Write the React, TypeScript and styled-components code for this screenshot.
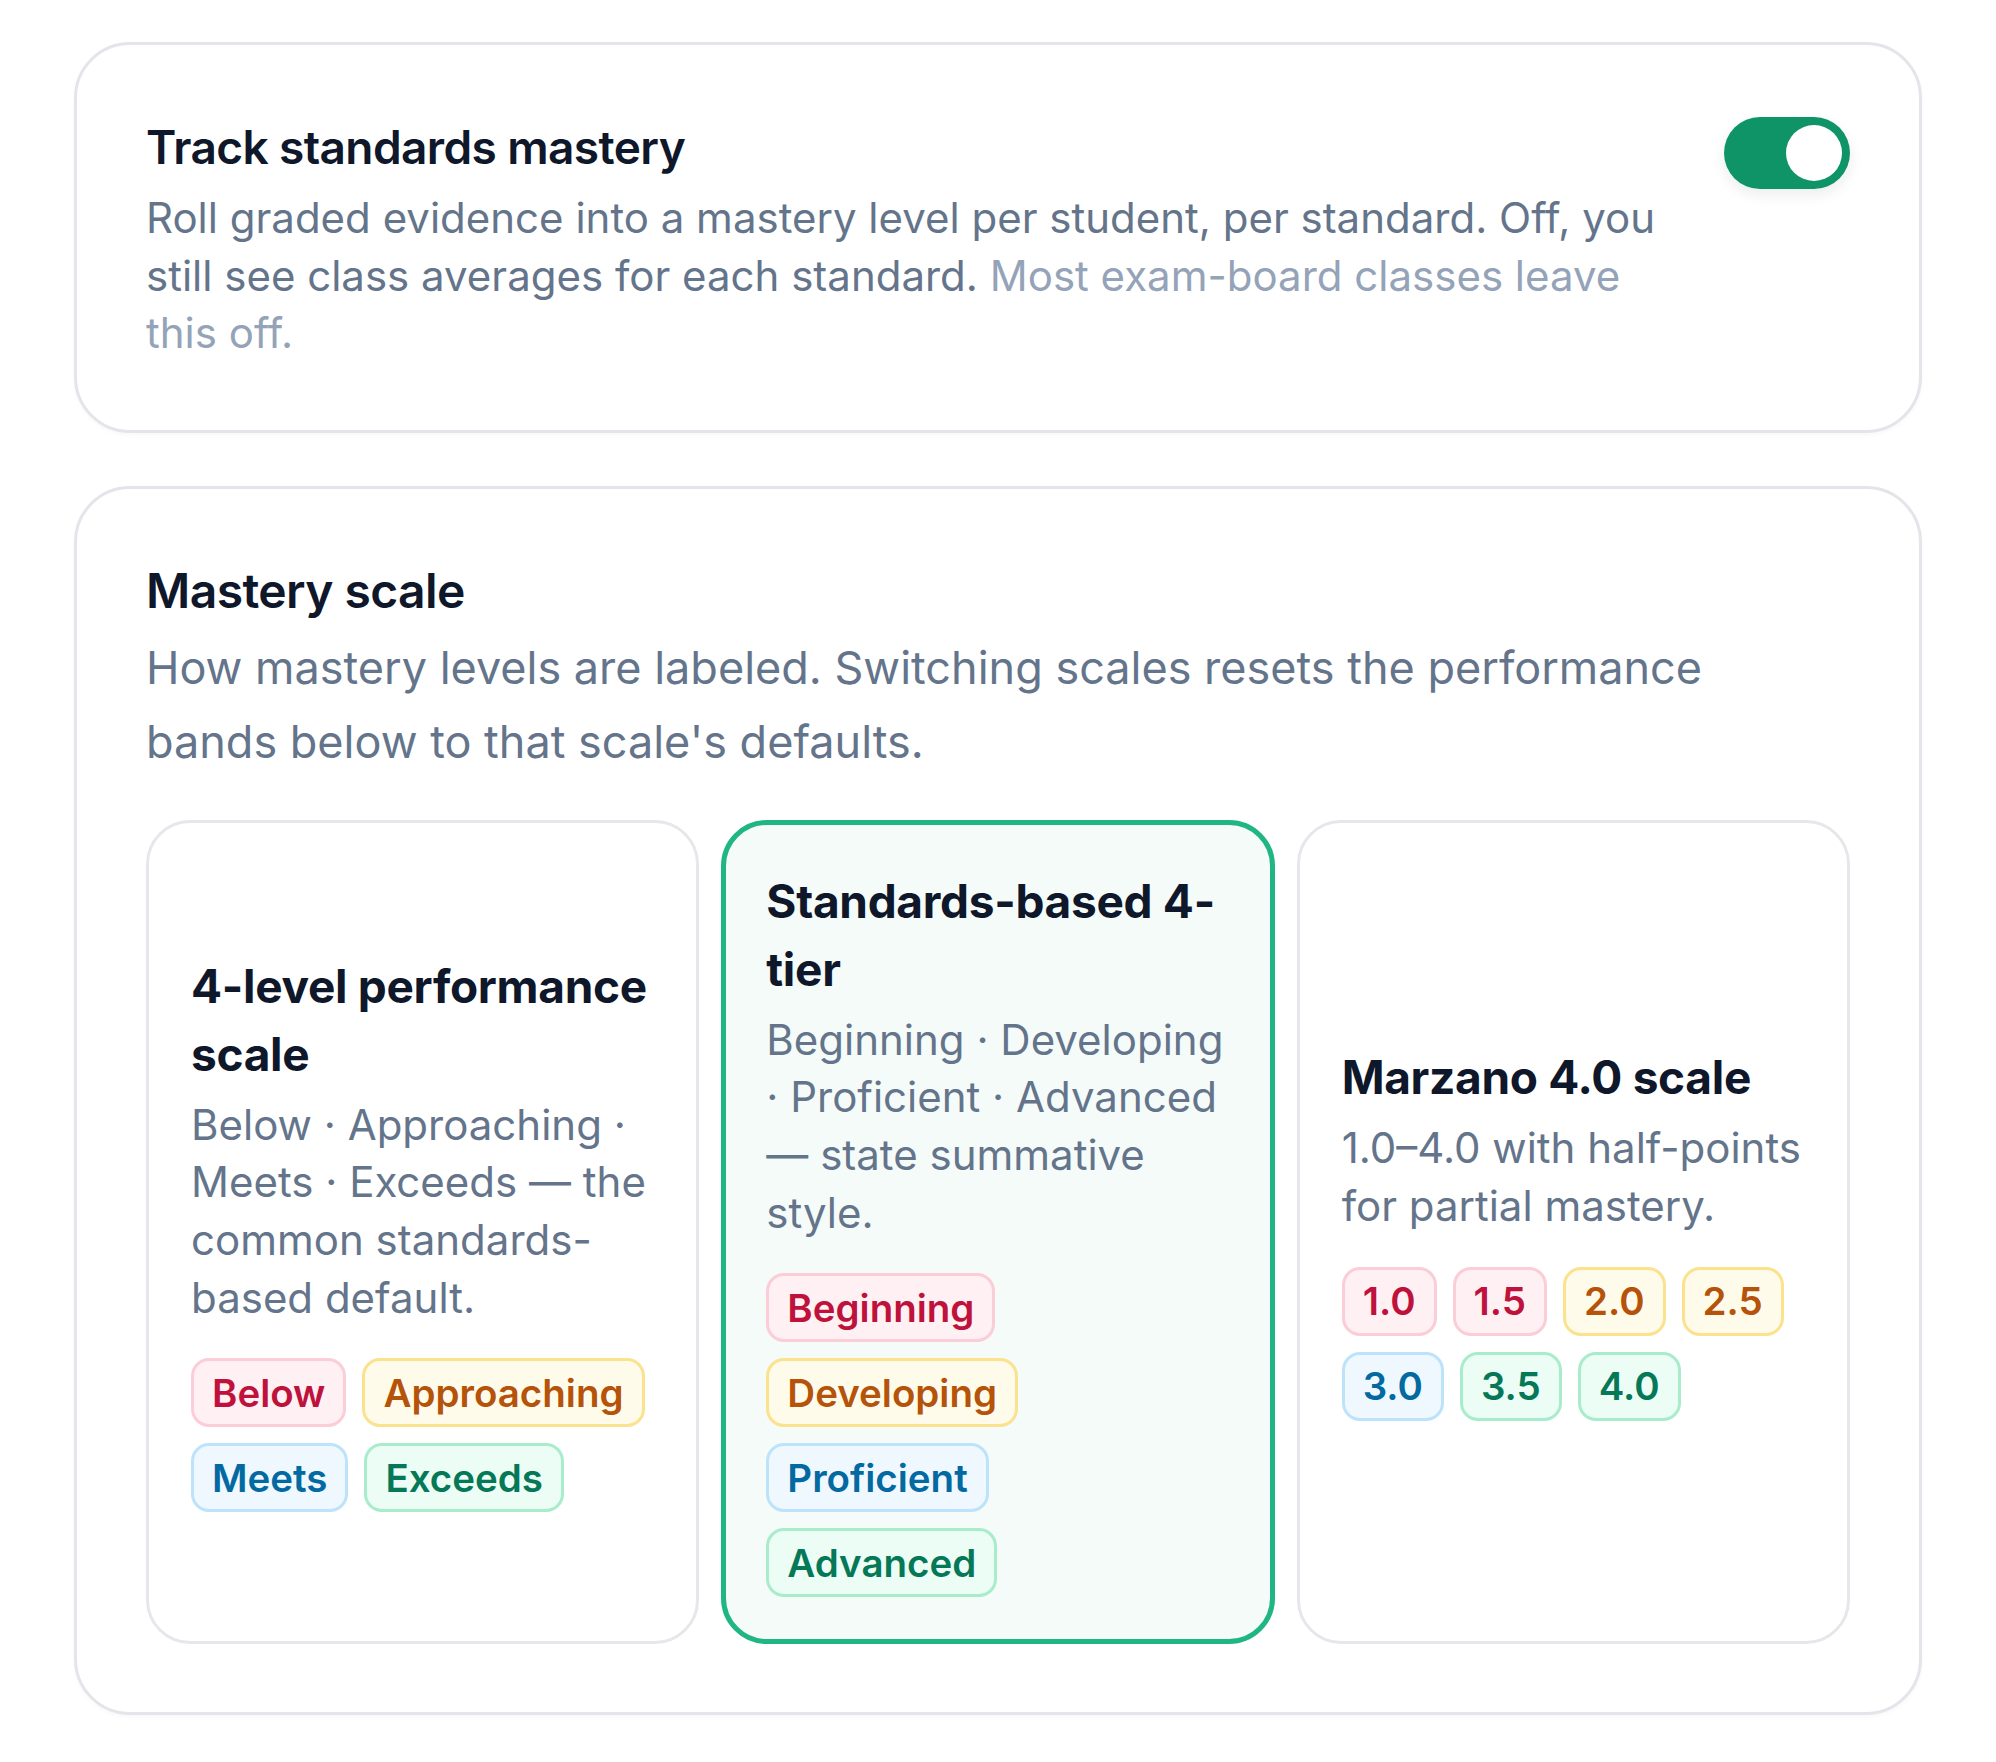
import React from 'react'
import styled, { createGlobalStyle } from 'styled-components'

const GlobalStyle = createGlobalStyle`
  body {
    margin: 0;
    background: #ffffff;
    font-family: Inter, 'Noto Sans', sans-serif;
    color: #0f172a;
  }
`

const Page = styled.div`
  display: flex;
  flex-direction: column;
  gap: 53px;
  padding: 42px 74px;
`

const Panel = styled.section`
  border: 3px solid #e3e5ea;
  border-radius: 56px;
  background: #ffffff;
  box-shadow: 0 2px 4px rgba(15, 23, 42, 0.03);
  padding: 72px 69px 68px;
`

const ToggleRow = styled.div`
  display: flex;
  align-items: flex-start;
  justify-content: space-between;
  gap: 40px;
`

const PanelTitle = styled.h2<{ $large?: boolean }>`
  margin: 0;
  font-size: ${p => (p.$large ? '48px' : '46px')};
  line-height: 60px;
  font-weight: 600;
  letter-spacing: -0.6px;
  color: #0f172a;
`

const PanelText = styled.p<{ $large?: boolean }>`
  margin: ${p => (p.$large ? '10px' : '12px')} 0 0;
  font-size: ${p => (p.$large ? '45px' : '42px')};
  line-height: ${p => (p.$large ? '74px' : '57.6px')};
  color: #64748b;
  max-width: ${p => (p.$large ? '1650px' : '1540px')};
`

const Muted = styled.span`
  color: #94a3b8;
`

const Switch = styled.button<{ $on: boolean }>`
  flex: none;
  width: 126px;
  height: 72px;
  border: none;
  border-radius: 36px;
  padding: 8px;
  display: flex;
  justify-content: ${p => (p.$on ? 'flex-end' : 'flex-start')};
  background: ${p => (p.$on ? '#0e9466' : '#cbd5e1')};
  box-shadow: 0 6px 14px rgba(15, 23, 42, 0.08);
  cursor: pointer;
  &::after {
    content: '';
    width: 56px;
    height: 56px;
    border-radius: 50%;
    background: #ffffff;
  }
`

const ScaleGrid = styled.div`
  display: grid;
  grid-template-columns: repeat(3, 1fr);
  gap: 22px;
  margin-top: 41px;
`

const ScaleCard = styled.button<{ $active?: boolean }>`
  display: flex;
  flex-direction: column;
  justify-content: center;
  text-align: left;
  font-family: inherit;
  cursor: pointer;
  border-radius: ${p => (p.$active ? '46px' : '44px')};
  border: ${p => (p.$active ? '5px solid #1fb584' : '3px solid #e5e7eb')};
  background: ${p => (p.$active ? '#f5fbf9' : '#ffffff')};
  padding: ${p => (p.$active ? '42px 40px' : '44px 42px')};
`

const CardTitle = styled.h3`
  margin: 0;
  font-size: 46px;
  line-height: 68px;
  font-weight: 700;
  color: #0f172a;
  letter-spacing: -0.3px;
`

const CardText = styled.p`
  margin: 8px 0 0;
  font-size: 42px;
  line-height: 57.6px;
  color: #64748b;
`

const Pills = styled.div`
  display: flex;
  flex-wrap: wrap;
  gap: 16px 16px;
  margin-top: 32px;
`

type Tone = 'red' | 'amber' | 'blue' | 'green'

const tones: Record<Tone, { bg: string; border: string; text: string }> = {
  red: { bg: '#fff1f3', border: '#fbcdd6', text: '#be123c' },
  amber: { bg: '#fffbeb', border: '#fbe28e', text: '#b45309' },
  blue: { bg: '#f0f8ff', border: '#bde3fb', text: '#0369a1' },
  green: { bg: '#ecfdf5', border: '#a9eccc', text: '#047857' },
}

const Pill = styled.span<{ $tone: Tone }>`
  display: inline-flex;
  align-items: center;
  height: 69px;
  box-sizing: border-box;
  padding: 0 18px;
  border-radius: 18px;
  border: 3px solid ${p => tones[p.$tone].border};
  background: ${p => tones[p.$tone].bg};
  color: ${p => tones[p.$tone].text};
  font-size: 38.5px;
  font-weight: 600;
`

const scales: {
  id: string
  title: string
  text: string
  pills: [string, Tone][]
}[] = [
  {
    id: 'four-level',
    title: '4-level performance scale',
    text: 'Below · Approaching · Meets · Exceeds — the common standards-based default.',
    pills: [
      ['Below', 'red'],
      ['Approaching', 'amber'],
      ['Meets', 'blue'],
      ['Exceeds', 'green'],
    ],
  },
  {
    id: 'sbg',
    title: 'Standards-based 4-tier',
    text: 'Beginning · Developing · Proficient · Advanced — state summative style.',
    pills: [
      ['Beginning', 'red'],
      ['Developing', 'amber'],
      ['Proficient', 'blue'],
      ['Advanced', 'green'],
    ],
  },
  {
    id: 'marzano',
    title: 'Marzano 4.0 scale',
    text: '1.0–4.0 with half-points for partial mastery.',
    pills: [
      ['1.0', 'red'],
      ['1.5', 'red'],
      ['2.0', 'amber'],
      ['2.5', 'amber'],
      ['3.0', 'blue'],
      ['3.5', 'green'],
      ['4.0', 'green'],
    ],
  },
]

export default function App() {
  const [tracking, setTracking] = React.useState(true)
  const [scale, setScale] = React.useState('sbg')
  return (
    <Page>
      <GlobalStyle />
      <Panel>
        <ToggleRow>
          <div>
            <PanelTitle>Track standards mastery</PanelTitle>
            <PanelText>
              Roll graded evidence into a mastery level per student, per standard. Off, you
              still see class averages for each standard.{' '}
              <Muted>Most exam-board classes leave this off.</Muted>
            </PanelText>
          </div>
          <Switch
            $on={tracking}
            aria-label='Track standards mastery'
            onClick={() => setTracking(!tracking)}
          />
        </ToggleRow>
      </Panel>
      <Panel>
        <PanelTitle $large>Mastery scale</PanelTitle>
        <PanelText $large>
          How mastery levels are labeled. Switching scales resets the performance bands
          below to that scale's defaults.
        </PanelText>
        <ScaleGrid>
          {scales.map(s => (
            <ScaleCard key={s.id} $active={scale === s.id} onClick={() => setScale(s.id)}>
              <CardTitle>{s.title}</CardTitle>
              <CardText>{s.text}</CardText>
              <Pills>
                {s.pills.map(([label, tone]) => (
                  <Pill key={label} $tone={tone}>
                    {label}
                  </Pill>
                ))}
              </Pills>
            </ScaleCard>
          ))}
        </ScaleGrid>
      </Panel>
    </Page>
  )
}
